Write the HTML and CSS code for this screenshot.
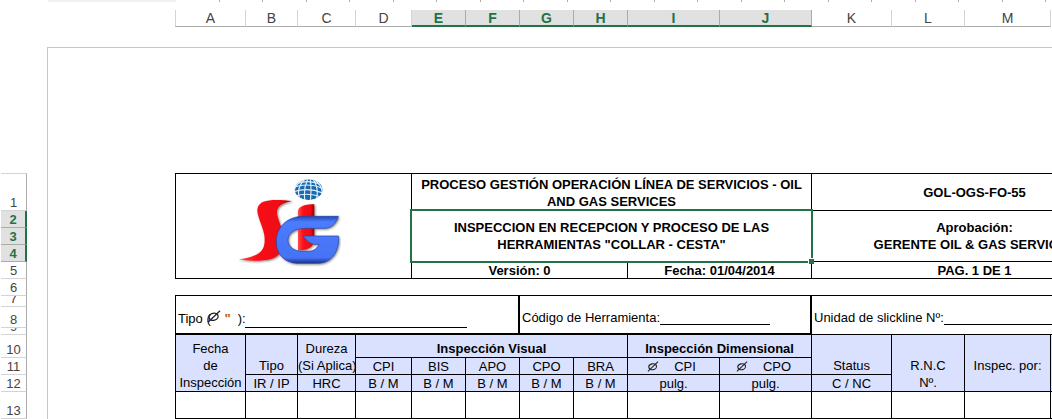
FILE: index.html
```html
<!DOCTYPE html>
<html lang="es">
<head>
<meta charset="utf-8">
<meta name="viewport" content="width=device-width, initial-scale=1">
<title>GOL-OGS-FO-55</title>
<link rel="stylesheet" href="styles.css">
</head>
<body>
<svg width="0" height="0" class="defs" aria-hidden="true">
  <symbol id="diameter" viewBox="0 0 14 13">
    <ellipse cx="6.6" cy="6.8" rx="4.6" ry="3.5" transform="rotate(-15 6.6 6.8)" fill="none" stroke="#222" stroke-width="1.3"/>
    <path d="M1 12.2 13 .8" stroke="#222" stroke-width="1.3" fill="none"/>
  </symbol>
</svg>

<div class="ruler"><div class="ruler-margin"></div><div class="ruler-scale"></div></div>

<div class="col-heads">
  <div class="w-a">A</div><div class="w-b">B</div><div class="w-c">C</div><div class="w-d">D</div>
  <div class="w-e on">E</div><div class="w-e on">F</div><div class="w-e on">G</div><div class="w-e on">H</div>
  <div class="w-i on">I</div><div class="w-i on">J</div>
  <div class="w-k">K</div><div class="w-l">L</div><div class="w-m">M</div>
</div>

<div class="workspace">
  <div class="row-heads">
    <div class="h-37">1</div>
    <div class="h-17 on">2</div><div class="h-17 on">3</div><div class="h-17 on">4</div>
    <div class="h-17">5</div><div class="h-17">6</div>
    <div class="h-11">7</div><div class="h-21">8</div><div class="h-7">9</div>
    <div class="h-23">10</div><div class="h-17">11</div><div class="h-17">12</div><div class="h-27">13</div>
  </div>

  <main class="page">
    <table class="sheet title">
      <colgroup><col class="w-logo"><col class="w-version"><col class="w-date"><col class="w-code"></colgroup>
      <tr class="h-37">
        <td rowspan="3" class="logo-cell">
          <svg class="logo" viewBox="0 0 312 282" role="img" aria-label="SIG">
            <defs>
              <linearGradient id="red" x1="0" x2="1"><stop offset="0" stop-color="#ff4a4a"/><stop offset=".3" stop-color="#fb1219"/><stop offset=".75" stop-color="#ee0a12"/><stop offset="1" stop-color="#a00008"/></linearGradient>
              <linearGradient id="blue" x1="0" x2="0" y1="0" y2="1"><stop offset="0" stop-color="#2448b4"/><stop offset=".12" stop-color="#4b7cff"/><stop offset=".88" stop-color="#4672f5"/><stop offset="1" stop-color="#17318c"/></linearGradient>
              <clipPath id="globe"><ellipse cx="215" cy="41" rx="42" ry="31"/></clipPath>
              <filter id="shade" x="-10%" y="-10%" width="120%" height="120%"><feDropShadow dx="3" dy="3" stdDeviation="3" flood-color="#333" flood-opacity=".6"/></filter>
            </defs>
            <g clip-path="url(#globe)">
              <ellipse cx="215" cy="41" rx="42" ry="31" fill="#1c68ac"/>
              <g fill="none" stroke="#dff0fa" stroke-width="3.5">
                <path d="M170 34q44-16 90 4M170 47q44-14 90 5M174 60q40-12 80 3M180 22q38-12 70 3"/>
                <path d="M204 9q-30 30-14 64M212 9q-14 32-8 66M220 9q4 32 0 66M228 9q20 30 9 66M198 11q-38 24-22 54M234 13q31 24 17 52"/>
              </g>
            </g>
            <g filter="url(#shade)">
              <path d="M166 75C138 72 100 69 79 77C60 85 58 103 64 120C69 139 79 158 82 178C85 204 82 225 56 237C42 244 24 248 5 250C33 256 80 256 105 248C136 238 143 208 139 178C135 150 120 128 120 107C121 89 139 80 166 75Z" fill="url(#red)"/>
              <path d="M183 104C187 89 207 85 232 85L232 184C232 210 219 224 183 223Z" fill="url(#red)"/>
              <path d="M304 121C299 139 286 156 264 157L203 157C175 158 156 169 153 188C151 211 169 226 198 226L216 226C232 225 242 215 246 205L233 205C220 204 208 193 198 180L304 180C309 222 286 261 243 262L180 262C142 260 118 234 118 198C118 157 145 125 193 121Z" fill="url(#blue)" stroke="#2445a5" stroke-width="2" stroke-linejoin="round"/>
            </g>
          </svg>
        </td>
        <td colspan="2" class="bottom">PROCESO GESTIÓN OPERACIÓN LÍNEA DE SERVICIOS - OIL<br>AND GAS SERVICES</td>
        <td>GOL-OGS-FO-55</td>
      </tr>
      <tr class="h-51">
        <td colspan="2" class="selected">INSPECCION EN RECEPCION Y PROCESO DE LAS<br>HERRAMIENTAS "COLLAR - CESTA"<span class="selection"><span class="handle"></span></span></td>
        <td>Aprobación:<br>GERENTE OIL &amp; GAS SERVICES</td>
      </tr>
      <tr class="h-17 thin">
        <td>Versión: 0</td>
        <td>Fecha: 01/04/2014</td>
        <td>PAG. 1 DE 1</td>
      </tr>
    </table>

    <form class="fields">
      <div class="field field-type">
        <label for="tipo">Tipo (<svg class="dia"><use href="#diameter"/></svg> <span class="inch">"</span>&nbsp; ):</label>
        <input id="tipo" type="text">
      </div>
      <div class="field field-tool">
        <label for="codigo">Código de Herramienta:</label>
        <input id="codigo" type="text">
      </div>
      <div class="field field-unit">
        <label for="unidad">Unidad de slickline Nº:</label>
        <input id="unidad" type="text">
      </div>
    </form>

    <table class="sheet inspection">
      <colgroup><col class="w-a"><col class="w-b"><col class="w-c"><col class="w-d"><col class="w-e"><col class="w-e"><col class="w-e"><col class="w-e"><col class="w-i"><col class="w-i"><col class="w-k"><col class="w-l"><col class="w-m"><col class="w-n"></colgroup>
      <thead>
        <tr class="h-23">
          <th rowspan="3">Fecha<br>de<br>Inspección</th>
          <th rowspan="2">Tipo</th>
          <th rowspan="2">Dureza<br>(Si Aplica)</th>
          <th colspan="5" class="group">Inspección Visual</th>
          <th colspan="2" class="group">Inspección Dimensional</th>
          <th rowspan="2">Status</th>
          <th rowspan="3">R.N.C<br>Nº.</th>
          <th rowspan="3" class="raised">Inspec. por:</th>
          <th rowspan="3"></th>
        </tr>
        <tr class="h-17 thin">
          <th>CPI</th><th>BIS</th><th>APO</th><th>CPO</th><th>BRA</th>
          <th class="measure"><svg class="dia wide"><use href="#diameter"/></svg>CPI</th>
          <th class="measure"><svg class="dia wide"><use href="#diameter"/></svg>CPO</th>
        </tr>
        <tr class="h-17 thin">
          <th>IR / IP</th><th>HRC</th><th>B / M</th><th>B / M</th><th>B / M</th><th>B / M</th><th>B / M</th><th>pulg.</th><th>pulg.</th><th>C / NC</th>
        </tr>
      </thead>
      <tbody>
        <tr class="h-27"><td></td><td></td><td></td><td></td><td></td><td></td><td></td><td></td><td></td><td></td><td></td><td></td><td></td><td></td></tr>
      </tbody>
    </table>
  </main>
</div>
</body>
</html>
```
FILE: styles.css
```css
* { box-sizing: border-box; }

body {
  margin: 0;
  overflow: hidden;
  background: #fff;
  color: #000;
  font: 13px/17px "Liberation Sans", Arial, sans-serif;
}

.defs { position: absolute; }

/* shared column widths */
.w-a { width: 70px; }
.w-b { width: 52px; }
.w-c { width: 58px; }
.w-d { width: 56px; }
.w-e { width: 54px; }
.w-i { width: 92px; }
.w-k { width: 80px; }
.w-l { width: 73px; }
.w-m { width: 86px; }
.w-n { width: 87px; }
.w-logo { width: 236px; }
.w-version { width: 216px; }
.w-date { width: 184px; }
.w-code { width: 326px; }

/* shared row heights */
.h-7 { height: 7px; }
.h-11 { height: 11px; }
.h-17 { height: 17px; }
.h-21 { height: 21px; }
.h-23 { height: 23px; }
.h-27 { height: 27px; }
.h-37 { height: 37px; }
.h-51 { height: 51px; }

/* ruler */
.ruler { display: flex; height: 2px; padding-left: 48px; }
.ruler-margin { width: 128px; background: #f1f1f1; }
.ruler-scale {
  flex: 1;
  background: repeating-linear-gradient(90deg, transparent 0 43px, #ababab 43px 44px, transparent 44px 86px, #ababab 86px 87px);
}

/* column headings */
.col-heads {
  display: flex;
  margin-top: 8px;
  padding-left: 175px;
  font-size: 14px;
  line-height: 16px;
  color: #444;
  text-align: center;
}
.col-heads > div {
  flex: none;
  height: 17px;
  border-right: 1px solid #d4d4d4;
  border-bottom: 1px solid #ababab;
}
.col-heads > div:first-child {
  width: 71px;
  border-left: 1px solid #d4d4d4;
}
.col-heads .on {
  background: #e1e1e1;
  border-right-color: #ababab;
  border-bottom: 2px solid #217346;
  color: #217346;
  font-weight: bold;
}

/* sheet area */
.workspace { display: flex; gap: 20px; }

.row-heads {
  flex: none;
  width: 27px;
  margin-top: 146px;
  padding-left: 1px;
  line-height: 15px;
  color: #444;
  text-align: center;
}
.row-heads > div {
  display: flex;
  align-items: flex-end;
  justify-content: center;
  overflow: hidden;
  border-right: 1px solid #ababab;
  border-bottom: 1px solid #d4d4d4;
}
.row-heads > div:first-child {
  height: 38px;
  border-top: 1px solid #d4d4d4;
}
.row-heads .on {
  background: #e1e1e1;
  border-right: 2px solid #217346;
  border-bottom-color: #ababab;
  color: #217346;
  font-weight: bold;
}

.page {
  flex: 1;
  min-width: 0;
  margin-top: 20px;
  padding: 125px 0 0 127px;
  border-top: 1px solid #c6c6c6;
  border-left: 1px solid #c6c6c6;
}

/* tables */
.sheet {
  width: 963px;
  table-layout: fixed;
  border-collapse: separate;
  border-spacing: 0;
  border-left: 1px solid #000;
  text-align: center;
  white-space: nowrap;
}
.sheet th,
.sheet td {
  padding: 0;
  border-right: 1px solid #000;
  border-bottom: 1px solid #000;
}
.sheet .thin { line-height: 15px; }
.sheet .thin > * { padding-top: 1px; }

.title {
  border-top: 1px solid #000;
  font-weight: bold;
}
.title .bottom { vertical-align: bottom; }
.title .logo-cell { padding: 0 10px 6px 0; }
.logo {
  display: block;
  width: 104px;
  height: 94px;
  margin: 0 auto;
}

.selected { position: relative; }
.selection {
  position: absolute;
  inset: -2px;
  border: 2px solid #217346;
}
.handle {
  position: absolute;
  right: -3px;
  bottom: -3px;
  width: 5px;
  height: 5px;
  background: #217346;
  box-shadow: -1px -1px 0 #fff;
}

/* form line */
.fields {
  display: flex;
  width: 963px;
  height: 40px;
  margin-top: 16px;
  border: 1px solid #000;
  border-bottom: 0;
}
.field {
  display: flex;
  flex: none;
  align-items: flex-end;
  padding: 0 0 8px 2px;
  border-right: 2px solid #000;
  border-bottom: 2px solid #000;
  line-height: 15px;
  white-space: nowrap;
}
.field input {
  flex: 1;
  min-width: 0;
  height: 17px;
  padding: 0;
  border: 0;
  border-bottom: 1px solid #000;
  outline: 0;
  background: none;
  font: inherit;
}
.field-type { width: 344px; padding-right: 51px; padding-bottom: 5px; }
.field-type label { width: 67px; padding-bottom: 2px; }
.field-tool { width: 292px; padding-right: 40px; }
.field-unit { width: 325px; padding-right: 40px; padding-bottom: 9px; border-right: 0; border-bottom-width: 1px; }

.dia {
  width: 14px;
  height: 13px;
  margin: -2px 0 0 -4px;
  vertical-align: 0;
}
.dia.wide {
  width: 12px;
  height: 11px;
  margin: -2px 15px -2px 0;
  vertical-align: 1px;
}
.inch { color: #c55a11; font-weight: bold; }

/* inspection grid */
.inspection th {
  background: #d9e1ff;
  font-weight: normal;
  vertical-align: bottom;
}
.inspection .group { font-weight: bold; }
.inspection .raised { padding-bottom: 17px; }
.inspection .measure { padding-right: 4px; }
```
